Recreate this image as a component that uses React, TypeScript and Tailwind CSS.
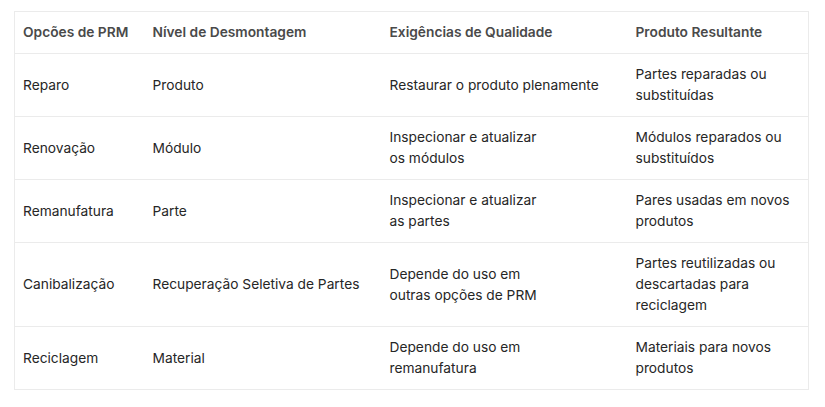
const rows: [string, string, string[], string[]][] = [
  ["Reparo", "Produto", ["Restaurar o produto plenamente"], ["Partes reparadas ou", "substituídas"]],
  ["Renovação", "Módulo", ["Inspecionar e atualizar", "os módulos"], ["Módulos reparados ou", "substituídos"]],
  ["Remanufatura", "Parte", ["Inspecionar e atualizar", "as partes"], ["Pares usadas em novos", "produtos"]],
  [
    "Canibalização",
    "Recuperação Seletiva de Partes",
    ["Depende do uso em", "outras opções de PRM"],
    ["Partes reutilizadas ou", "descartadas para", "reciclagem"],
  ],
  ["Reciclagem", "Material", ["Depende do uso em", "remanufatura"], ["Materiais para novos", "produtos"]],
];

function Lines({ lines }: { lines: string[] }) {
  return (
    <>
      {lines.map((l, i) => (
        <span key={i} className="block">
          {l}
        </span>
      ))}
    </>
  );
}

export default function App() {
  return (
    <div className="min-h-[407px] bg-white pl-[14px] pt-[11px] font-['Inter',sans-serif] text-[13.75px] leading-[21px]">
      <table className="w-[794px] table-fixed border-collapse border border-[#ebebeb]">
        <colgroup>
          <col className="w-[130px]" />
          <col className="w-[237px]" />
          <col className="w-[246px]" />
          <col className="w-[181px]" />
        </colgroup>
        <thead>
          <tr className="border-b border-[#ebebeb] text-left font-semibold text-[#4a4a4a]">
            <th className="px-2 py-[10px] font-semibold">Opcões de PRM</th>
            <th className="px-2 py-[10px] font-semibold">Nível de Desmontagem</th>
            <th className="px-2 py-[10px] font-semibold">Exigências de Qualidade</th>
            <th className="px-2 py-[10px] font-semibold">Produto Resultante</th>
          </tr>
        </thead>
        <tbody className="text-[#262626]">
          {rows.map(([opt, level, req, result]) => (
            <tr key={opt} className="border-b border-[#ebebeb]">
              <td className="px-2 py-[10px] align-middle">{opt}</td>
              <td className="px-2 py-[10px] align-middle">{level}</td>
              <td className="px-2 py-[10px] align-middle">
                <Lines lines={req} />
              </td>
              <td className="px-2 py-[10px] align-middle">
                <Lines lines={result} />
              </td>
            </tr>
          ))}
        </tbody>
      </table>
    </div>
  );
}
